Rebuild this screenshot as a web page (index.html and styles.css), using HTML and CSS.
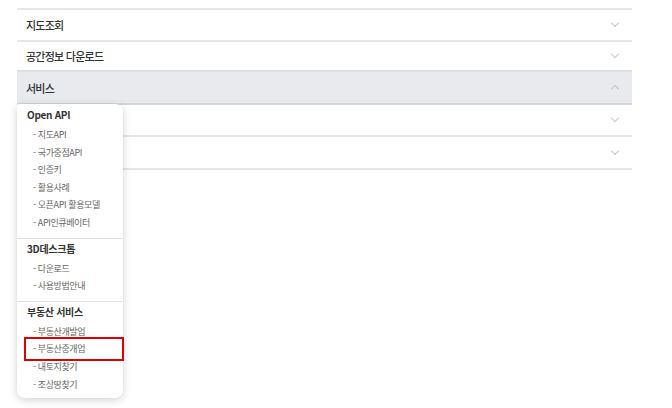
FILE: index.html
```html
<!DOCTYPE html>
<html lang="ko">
<head>
<meta charset="utf-8">
<link rel="stylesheet" href="styles.css">
</head>
<body>
<div class="menu">
  <div class="row r1"><span class="label">지도조회</span><span class="chev down"></span></div>
  <div class="row r2"><span class="label">공간정보 다운로드</span><span class="chev down"></span></div>
  <div class="row r3 active"><span class="label">서비스</span><span class="chev up"></span>
    <div class="dropdown">
      <div class="group first">
        <div class="gtitle">Open API</div>
        <ul>
          <li>- 지도API</li>
          <li>- 국가중점API</li>
          <li>- 인증키</li>
          <li>- 활용사례</li>
          <li>- 오픈API 활용모델</li>
          <li>- API인큐베이터</li>
        </ul>
      </div>
      <div class="group">
        <div class="gtitle">3D데스크톱</div>
        <ul>
          <li>- 다운로드</li>
          <li>- 사용방법안내</li>
        </ul>
      </div>
      <div class="group last">
        <div class="gtitle">부동산 서비스</div>
        <ul>
          <li>- 부동산개발업</li>
          <li class="hl">- 부동산중개업</li>
          <li>- 내토지찾기</li>
          <li>- 조상땅찾기</li>
        </ul>
      </div>
    </div>
  </div>
  <div class="row r4"><span class="label"></span><span class="chev down"></span></div>
  <div class="row r5"><span class="label"></span><span class="chev down"></span></div>
</div>
</body>
</html>
```
FILE: styles.css
```css
html, body { margin: 0; padding: 0; background: #fff; }
body {
  font-family: "Noto Sans CJK KR", "Noto Sans", sans-serif;
  color: #333;
  width: 672px;
  height: 408px;
  overflow: hidden;
}
.menu {
  margin: 8px 0 0 17px;
  width: 615px;
  border-top: 2px solid #e6e6e6;
}
.row {
  position: relative;
  height: 30px;
  border-bottom: 2px solid #e6e6e6;
  display: flex;
  align-items: center;
  justify-content: space-between;
  padding: 0 14px 0 9px;
}
.r2 { height: 28px; border-bottom-color: #dcdfe3; }
.r3 { height: 31px; }
.r5 { height: 31px; }
.row.active {
  background: #e8eaed;
  border-bottom-color: #d3d6da;
}
.label {
  font-size: 11px;
  font-weight: 500;
  letter-spacing: -0.75px;
  color: #333;
}
.chev {
  width: 5px;
  height: 5px;
  border-right: 1px solid #c8c8c8;
  border-bottom: 1px solid #c8c8c8;
}
.chev.down { transform: translateY(-2px) rotate(45deg); }
.chev.up { transform: translateY(1px) rotate(-135deg); }
.dropdown {
  position: absolute;
  left: 0;
  top: calc(100% + 1px);
  width: 106px;
  box-sizing: border-box;
  background: #fff;
  border-radius: 2px 8px 8px 8px;
  box-shadow: 0 2px 8px rgba(0, 0, 0, 0.18);
  z-index: 2;
}
.group {
  padding: 3px 0 6px 10px;
  border-bottom: 1px solid #e3e3e3;
}
.group.first { padding-top: 4px; }
.group.last { border-bottom: none; padding-bottom: 5px; }
.gtitle {
  font-size: 10px;
  font-weight: 700;
  color: #333;
  letter-spacing: -0.3px;
  height: 14px;
  line-height: 14px;
  margin-bottom: 4px;
}
ul { list-style: none; margin: 0; padding: 0; }
li {
  font-size: 9px;
  color: #666;
  height: 17.6px;
  line-height: 17.6px;
  padding-left: 6px;
  letter-spacing: -0.4px;
}
li.hl { position: relative; }
li.hl::after {
  content: "";
  position: absolute;
  left: -3px;
  right: -1px;
  top: -3px;
  bottom: -3px;
  border: 2px solid #e00000;
}
```
